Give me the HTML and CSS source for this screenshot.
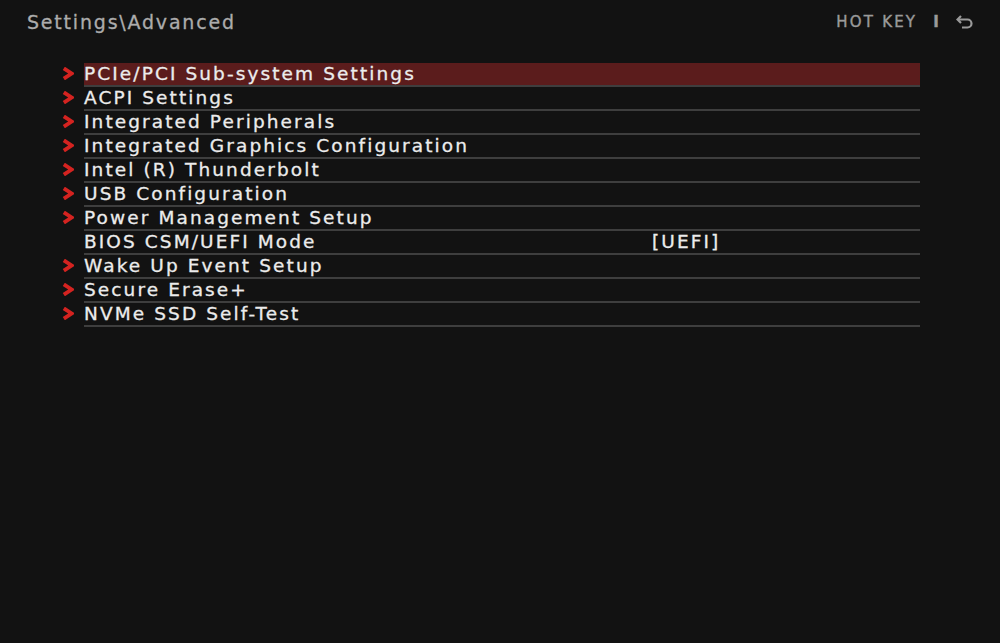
FILE: index.html
```html
<!DOCTYPE html>
<html>
<head>
<meta charset="utf-8">
<link rel="stylesheet" href="styles.css">
</head>
<body>
<div class="screen">
  <header class="top">
    <div class="title">Settings\Advanced</div>
    <div class="hotkey">
      <span>HOT KEY</span>
      <span class="sep">I</span>
      <svg class="back" width="18" height="14" viewBox="0 0 18 14">
        <path d="M5 1 L1.5 4.5 L5 8" fill="none" stroke="#9a9a9a" stroke-width="2.2" stroke-linejoin="miter"/>
        <path d="M2 4.5 H11.5 A4 4 0 0 1 11.5 12.5 H6" fill="none" stroke="#9a9a9a" stroke-width="2.2"/>
      </svg>
    </div>
  </header>
  <ul class="menu">
    <li class="row active"><span class="chev"><svg viewBox="0 0 12 13" width="12" height="13"><path d="M1.8 1.3 L9.6 6.5 L1.8 11.7" fill="none" stroke="#d42320" stroke-width="3.8"/></svg></span><span class="label">PCIe/PCI Sub-system Settings</span></li>
    <li class="row"><span class="chev"><svg viewBox="0 0 12 13" width="12" height="13"><path d="M1.8 1.3 L9.6 6.5 L1.8 11.7" fill="none" stroke="#d42320" stroke-width="3.8"/></svg></span><span class="label">ACPI Settings</span></li>
    <li class="row"><span class="chev"><svg viewBox="0 0 12 13" width="12" height="13"><path d="M1.8 1.3 L9.6 6.5 L1.8 11.7" fill="none" stroke="#d42320" stroke-width="3.8"/></svg></span><span class="label">Integrated Peripherals</span></li>
    <li class="row"><span class="chev"><svg viewBox="0 0 12 13" width="12" height="13"><path d="M1.8 1.3 L9.6 6.5 L1.8 11.7" fill="none" stroke="#d42320" stroke-width="3.8"/></svg></span><span class="label">Integrated Graphics Configuration</span></li>
    <li class="row"><span class="chev"><svg viewBox="0 0 12 13" width="12" height="13"><path d="M1.8 1.3 L9.6 6.5 L1.8 11.7" fill="none" stroke="#d42320" stroke-width="3.8"/></svg></span><span class="label">Intel (R) Thunderbolt</span></li>
    <li class="row"><span class="chev"><svg viewBox="0 0 12 13" width="12" height="13"><path d="M1.8 1.3 L9.6 6.5 L1.8 11.7" fill="none" stroke="#d42320" stroke-width="3.8"/></svg></span><span class="label">USB Configuration</span></li>
    <li class="row"><span class="chev"><svg viewBox="0 0 12 13" width="12" height="13"><path d="M1.8 1.3 L9.6 6.5 L1.8 11.7" fill="none" stroke="#d42320" stroke-width="3.8"/></svg></span><span class="label">Power Management Setup</span></li>
    <li class="row"><span class="chev"></span><span class="label">BIOS CSM/UEFI Mode</span><span class="value">[UEFI]</span></li>
    <li class="row"><span class="chev"><svg viewBox="0 0 12 13" width="12" height="13"><path d="M1.8 1.3 L9.6 6.5 L1.8 11.7" fill="none" stroke="#d42320" stroke-width="3.8"/></svg></span><span class="label">Wake Up Event Setup</span></li>
    <li class="row"><span class="chev"><svg viewBox="0 0 12 13" width="12" height="13"><path d="M1.8 1.3 L9.6 6.5 L1.8 11.7" fill="none" stroke="#d42320" stroke-width="3.8"/></svg></span><span class="label">Secure Erase+</span></li>
    <li class="row"><span class="chev"><svg viewBox="0 0 12 13" width="12" height="13"><path d="M1.8 1.3 L9.6 6.5 L1.8 11.7" fill="none" stroke="#d42320" stroke-width="3.8"/></svg></span><span class="label">NVMe SSD Self-Test</span></li>
  </ul>
</div>
</body>
</html>
```
FILE: styles.css
```css
html, body {
  margin: 0;
  padding: 0;
  background: #111111;
}
.screen {
  width: 1000px;
  height: 643px;
  background: #121212;
  font-family: "DejaVu Sans", sans-serif;
  overflow: hidden;
}
.top {
  display: flex;
  justify-content: space-between;
  align-items: center;
  padding: 10px 26px 0 27px;
  height: 24px;
}
.title {
  color: #acacac;
  font-size: 19px;
  letter-spacing: 1.8px;
  -webkit-text-stroke: 0.3px #acacac;
}
.hotkey {
  display: flex;
  align-items: center;
  color: #9a9a9a;
  font-size: 15px;
  letter-spacing: 2.2px;
  -webkit-text-stroke: 0.4px #9a9a9a;
}
.hotkey .sep {
  margin: 0 15px 0 16px;
  font-weight: bold;
}
.back {
  display: block;
}
.menu {
  list-style: none;
  margin: 29px 0 0 0;
  padding: 0 80px 0 62px;
}
.row {
  display: flex;
  align-items: center;
  height: 22px;
  border-bottom: 2px solid #3e3e3e;
  position: relative;
  color: #ececec;
  font-size: 18.5px;
  letter-spacing: 2.1px;
  -webkit-text-stroke: 0.3px #ececec;
}
.chev {
  width: 22px;
  flex: none;
  align-self: stretch;
  background: #121212;
  margin-bottom: -2px;
  padding-top: 4px;
  box-sizing: border-box;
}
.chev svg {
  display: block;
}
.label {
  flex: 1;
  align-self: stretch;
  display: flex;
  align-items: center;
  padding-bottom: 2px;
  box-sizing: border-box;
  white-space: nowrap;
}
.active .label {
  background: #5b1c1c;
}
.value {
  position: absolute;
  left: 590px;
  top: 0;
  height: 20px;
  display: flex;
  align-items: center;
}
```
